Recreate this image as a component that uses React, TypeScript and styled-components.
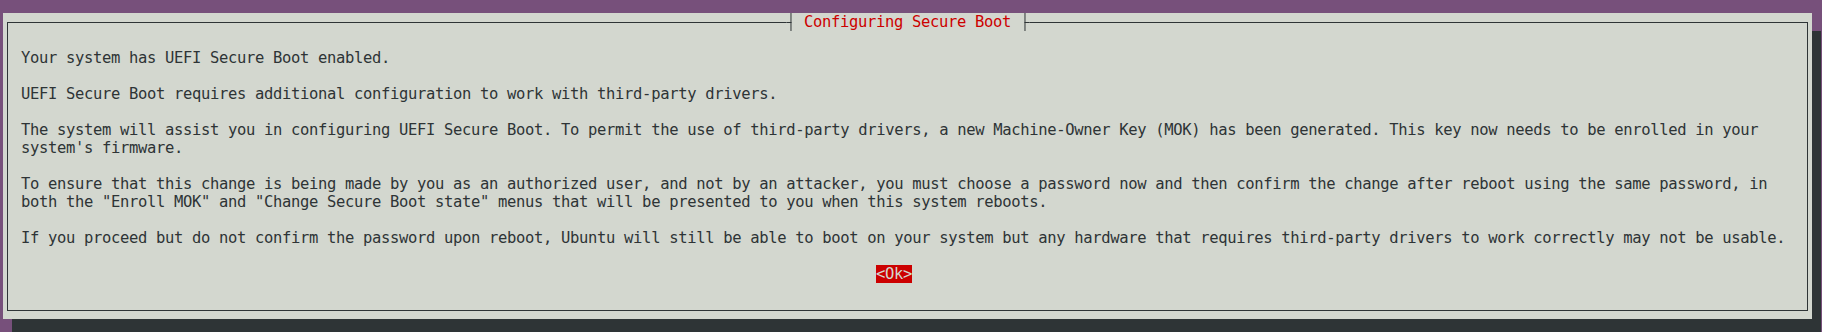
import React from 'react';
import styled, { createGlobalStyle } from 'styled-components';

const purple = '#77507b';
const paper = '#d3d7cf';
const ink = '#2e3436';
const red = '#cc0000';

const GlobalStyle = createGlobalStyle`
  html, body {
    margin: 0;
    padding: 0;
    background: ${purple};
  }
`;

const Screen = styled.div`
  width: 1822px;
  height: 332px;
  box-sizing: border-box;
  padding: 13px 0 0 3px;
  overflow: hidden;
  background: ${purple};
  font-family: "DejaVu Sans Mono", "Liberation Mono", monospace;
  font-size: 15.5px;
  letter-spacing: -0.33px;
  line-height: 18px;
  color: ${ink};
`;

const Dialog = styled.div`
  width: 1809px;
  height: 306px;
  box-sizing: border-box;
  padding: 9px 4px 8px 4px;
  display: flex;
  flex-direction: column;
  background: ${paper};
  box-shadow: 9px 18px 0 0 ${ink};
`;

const Frame = styled.div`
  flex: 1;
  position: relative;
  border: 1px solid ${ink};
  padding: 26px 12px 0 13px;
`;

const Title = styled.div`
  position: absolute;
  top: -10px;
  left: 50%;
  transform: translateX(-50%);
  display: flex;
  height: 18px;
  background: ${paper};
  color: ${red};
  white-space: pre;
`;

const Tick = styled.span<{ $side: 'left' | 'right' }>`
  position: relative;
  width: 9px;
  height: 18px;

  &::before {
    content: '';
    position: absolute;
    left: 4px;
    top: 0;
    width: 1px;
    height: 18px;
    background: ${ink};
  }

  &::after {
    content: '';
    position: absolute;
    top: 9px;
    height: 1px;
    width: 5px;
    background: ${ink};
    ${(p) => (p.$side === 'left' ? 'left: 0;' : 'right: 0;')}
  }
`;

const Paragraph = styled.div`
  margin-bottom: 18px;
`;

const Line = styled.div`
  height: 18px;
  white-space: pre;
`;

const ButtonRow = styled.div`
  display: flex;
  padding-left: 855px;
`;

const OkButton = styled.span`
  height: 18px;
  background: ${red};
  color: ${paper};
  white-space: pre;
`;

const paragraphs: string[][] = [
  ['Your system has UEFI Secure Boot enabled.'],
  ['UEFI Secure Boot requires additional configuration to work with third-party drivers.'],
  [
    'The system will assist you in configuring UEFI Secure Boot. To permit the use of third-party drivers, a new Machine-Owner Key (MOK) has been generated. This key now needs to be enrolled in your',
    "system's firmware.",
  ],
  [
    'To ensure that this change is being made by you as an authorized user, and not by an attacker, you must choose a password now and then confirm the change after reboot using the same password, in',
    'both the "Enroll MOK" and "Change Secure Boot state" menus that will be presented to you when this system reboots.',
  ],
  [
    'If you proceed but do not confirm the password upon reboot, Ubuntu will still be able to boot on your system but any hardware that requires third-party drivers to work correctly may not be usable.',
  ],
];

const App = () => {
  return (
    <>
      <GlobalStyle />
      <Screen>
        <Dialog>
          <Frame>
            <Title>
              <Tick $side="left" />
              <span> Configuring Secure Boot </span>
              <Tick $side="right" />
            </Title>
            {paragraphs.map((lines, i) => (
              <Paragraph key={i}>
                {lines.map((l, j) => (
                  <Line key={j}>{l}</Line>
                ))}
              </Paragraph>
            ))}
            <ButtonRow>
              <OkButton>{'<Ok>'}</OkButton>
            </ButtonRow>
          </Frame>
        </Dialog>
      </Screen>
    </>
  );
};

export default App;
